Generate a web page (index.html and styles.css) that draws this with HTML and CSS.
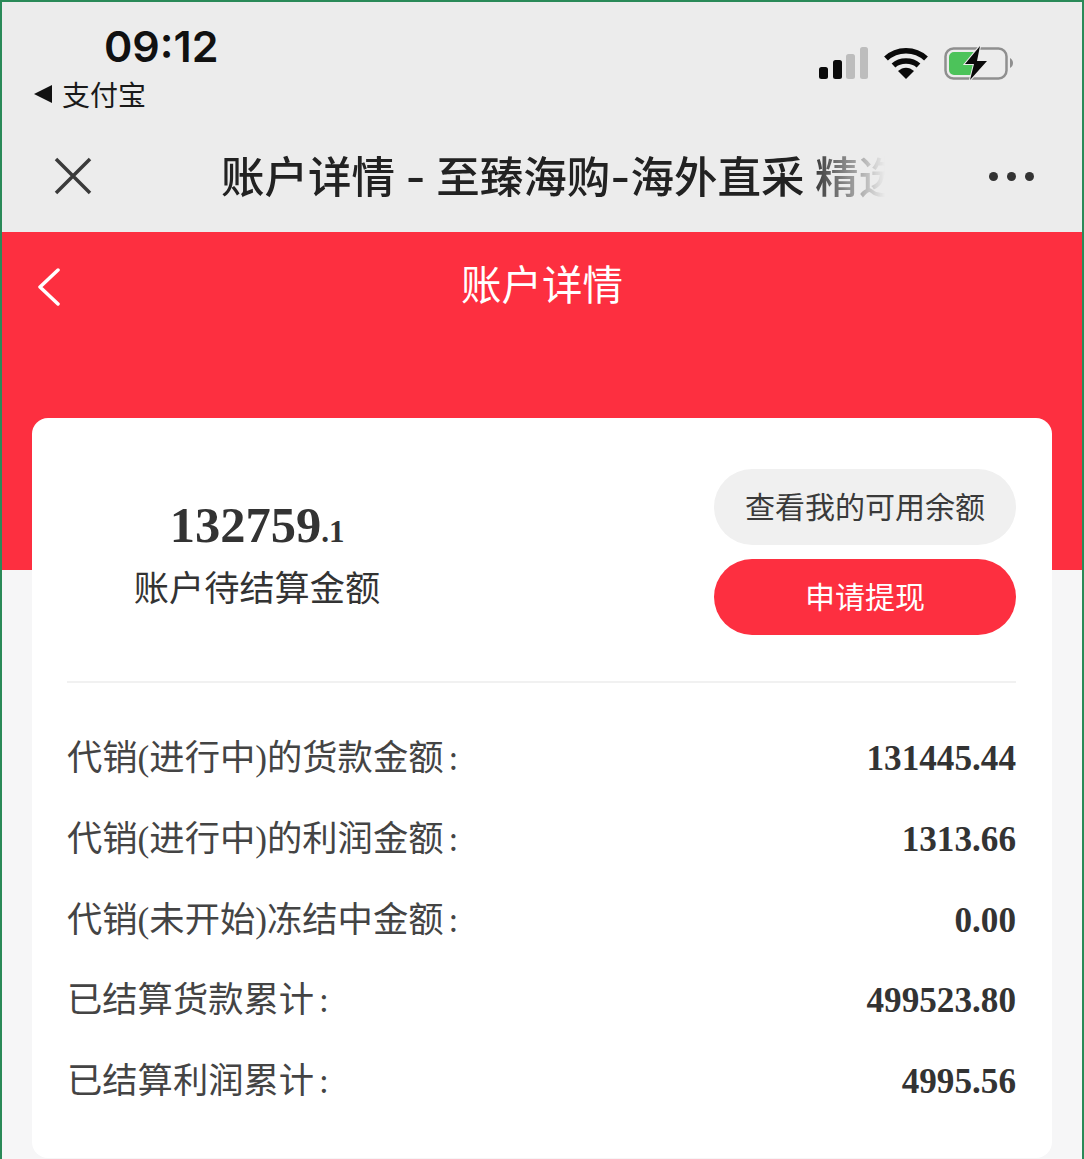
FILE: index.html
```html
<!DOCTYPE html>
<html lang="zh-CN">
<head>
    <meta charset="UTF-8">
    <meta name="viewport" content="width=device-width, initial-scale=1.0">
    <title>账户详情</title>
    <link rel="stylesheet" href="styles.css">
</head>
<body>
    <div class="status-bar">
        <div class="status-left">
            <div class="time">09:12</div>
            <div class="back-app"><span class="back-tri"></span>支付宝</div>
        </div>
        <div class="status-icons">
            <svg width="49" height="32" viewBox="0 0 49 32">
                <rect x="0" y="20" width="9" height="12" rx="2.500" fill="#0a0a0a"/>
                <rect x="14" y="13" width="9" height="19" rx="2.500" fill="#0a0a0a"/>
                <rect x="27" y="7" width="9" height="25" rx="2.500" fill="#bdbdbd"/>
                <rect x="41" y="0" width="8" height="32" rx="2.500" fill="#bdbdbd"/>
            </svg>
            <svg width="44" height="32" viewBox="0 0 44 32">
                <path d="M2 11.500C13 1 31 1 42 11.500" fill="none" stroke="#0a0a0a" stroke-width="5.500"/>
                <path d="M9.500 18.500C16 12.500 28 12.500 34.500 18.500" fill="none" stroke="#0a0a0a" stroke-width="5.500"/>
                <path d="M14 24C19 19.500 25 19.500 30 24L22 32Z" fill="#0a0a0a"/>
            </svg>
            <svg class="battery" width="70" height="38" viewBox="0 0 70 38">
                <rect x="1.500" y="4.500" width="61" height="30" rx="8" fill="none" stroke="#8f8f8f" stroke-width="2.500"/>
                <path d="M5 13a5 5 0 0 1 5-5H32L24 20h8l-4 11H10a5 5 0 0 1-5-5Z" fill="#4cc35a"/>
                <path d="M66 14c2 1 3 3 3 5s-1 4-3 5Z" fill="#8f8f8f"/>
                <path d="M36 2L21 20h9l-4 16 17-19H33Z" fill="#0a0a0a" stroke="#ececec" stroke-width="2" paint-order="stroke"/>
            </svg>
        </div>
    </div>

    <div class="browser-bar">
        <svg class="close-icon" width="38" height="38" viewBox="0 0 38 38">
            <path d="M2 2L36 36M36 2L2 36" stroke="#3a3a3a" stroke-width="3.500" fill="none"/>
        </svg>
        <div class="browser-title">账户详情 - 至臻海购-海外直采 精选</div>
        <div class="more-dots"><span></span><span></span><span></span></div>
    </div>

    <div class="hero">
        <svg class="back-icon" width="24" height="38" viewBox="0 0 24 38">
            <path d="M21 2L3 19L21 36" stroke="#fff" stroke-width="3.500" stroke-linecap="round" stroke-linejoin="round" fill="none"/>
        </svg>
        <div class="hero-title">账户详情</div>
    </div>

    <div class="card">
        <div class="summary">
            <div class="amount-box">
                <div class="amount">132759<small>.1</small></div>
                <div class="amount-label">账户待结算金额</div>
            </div>
            <div class="actions">
                <div class="btn btn-grey">查看我的可用余额</div>
                <div class="btn btn-red">申请提现</div>
            </div>
        </div>
        <div class="rows">
            <div class="row"><span>代销(进行中)的货款金额<i>:</i></span><b>131445.44</b></div>
            <div class="row"><span>代销(进行中)的利润金额<i>:</i></span><b>1313.66</b></div>
            <div class="row"><span>代销(未开始)冻结中金额<i>:</i></span><b>0.00</b></div>
            <div class="row"><span>已结算货款累计<i>:</i></span><b>499523.80</b></div>
            <div class="row"><span>已结算利润累计<i>:</i></span><b>4995.56</b></div>
        </div>
    </div>
</body>
</html>
```

FILE: styles.css
```css
* {
    box-sizing: border-box;
}
body {
    margin: 0;
    height: 1159px;
    overflow: hidden;
    background-color: #f6f6f7;
    border: 2px solid #2a8a58;
    border-bottom: none;
    font-family: "Liberation Serif", "Noto Sans CJK SC", serif;
    color: #333;
}
.status-bar {
    display: flex;
    justify-content: space-between;
    height: 122px;
    background-color: #ececec;
    padding: 19px 68px 0 32px;
}
.time {
    font-family: Inter, "Liberation Sans", sans-serif;
    font-size: 43px;
    font-weight: 600;
    line-height: 50px;
    color: #111;
    margin-left: 70px;
}
.back-app {
    display: flex;
    align-items: center;
    gap: 10px;
    font-family: "Noto Sans CJK SC", sans-serif;
    font-size: 28px;
    line-height: 38px;
    color: #1a1a1a;
    margin-top: 4px;
}
.back-tri {
    width: 0;
    height: 0;
    border-top: 9px solid transparent;
    border-bottom: 9px solid transparent;
    border-right: 18px solid #111;
}
.status-icons {
    display: flex;
    align-items: flex-start;
    gap: 16px;
    padding-top: 26px;
}
.battery {
    margin-top: -3px;
}
.browser-bar {
    display: flex;
    align-items: center;
    height: 108px;
    background-color: #ececec;
    padding: 0 48px 4px 52px;
}
.close-icon {
    flex-shrink: 0;
}
.browser-title {
    width: 664px;
    margin: 2px 0 0 129px;
    white-space: nowrap;
    overflow: hidden;
    font-family: Inter, "Noto Sans CJK SC", sans-serif;
    font-size: 43.5px;
    font-weight: 500;
    word-spacing: -1px;
    line-height: 60px;
    color: #222;
    -webkit-mask-image: linear-gradient(to right, #000 88%, transparent 100%);
    mask-image: linear-gradient(to right, #000 88%, transparent 100%);
}
.more-dots {
    display: flex;
    gap: 9px;
    margin-left: auto;
}
.more-dots span {
    width: 9px;
    height: 9px;
    border-radius: 50%;
    background-color: #333;
}
.hero {
    display: flex;
    align-items: flex-start;
    height: 338px;
    background-color: #fd2f40;
    padding: 31px 0 0 35px;
}
.back-icon {
    flex-shrink: 0;
    margin-top: 5px;
}
.hero-title {
    margin-left: 400px;
    font-family: "Noto Sans CJK SC", sans-serif;
    font-size: 40.5px;
    line-height: 40px;
    color: #fff;
}
.card {
    margin: -152px 30px 0;
    height: 740px;
    background-color: #fff;
    border-radius: 16px;
    padding: 0 36px 0 35px;
}
.summary {
    display: flex;
    justify-content: space-between;
    height: 265px;
    padding-top: 51px;
    border-bottom: 2px solid #f1f1f1;
}
.amount-box {
    width: 380px;
    text-align: center;
    padding-top: 26px;
}
.amount {
    font-size: 50.5px;
    font-weight: bold;
    line-height: 60px;
}
.amount small {
    font-size: 31px;
}
.amount-label {
    font-family: "Noto Sans CJK SC", sans-serif;
    font-size: 35.2px;
    line-height: 48px;
}
.actions {
    display: flex;
    flex-direction: column;
    gap: 14px;
}
.btn {
    width: 302px;
    height: 76px;
    border-radius: 38px;
    display: flex;
    align-items: center;
    justify-content: center;
    padding-bottom: 5px;
    font-family: "Noto Sans CJK SC", sans-serif;
    font-size: 30px;
}
.btn-grey {
    background-color: #f0f0f0;
    color: #3a3a3a;
}
.btn-red {
    background-color: #fd2f40;
    color: #fff;
}
.rows {
    padding-top: 36px;
}
.row {
    display: flex;
    justify-content: space-between;
    align-items: baseline;
    height: 80.75px;
    line-height: 80px;
    font-size: 35.3px;
    color: #444;
}
.row i {
    font-style: normal;
    margin-left: 5px;
}
.row b {
    font-size: 35.2px;
    color: #333;
}
```
